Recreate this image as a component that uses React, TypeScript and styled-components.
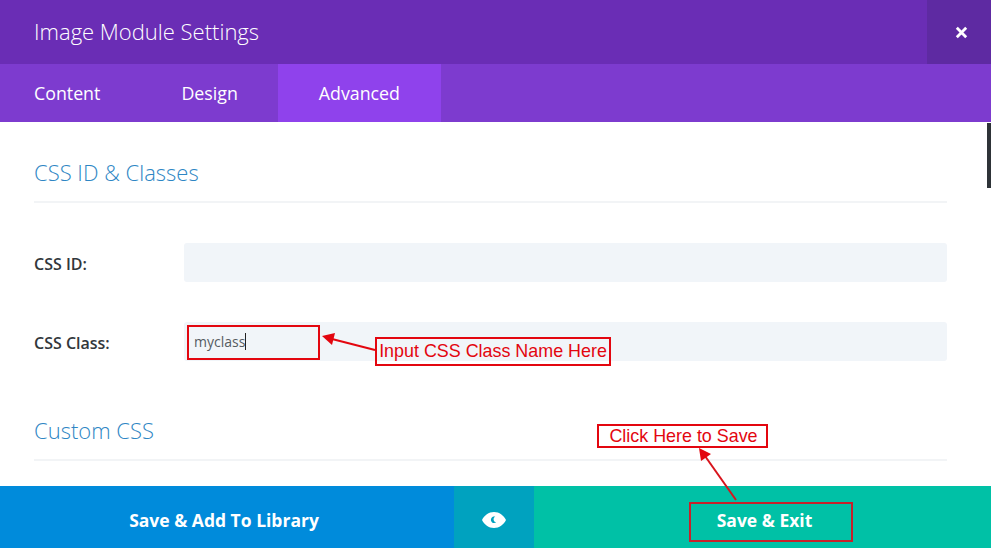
import React from "react";
import styled, { createGlobalStyle } from "styled-components";

const Global = createGlobalStyle`
  html, body { margin: 0; padding: 0; background: #fff; }
  * { box-sizing: border-box; }
`;

const Modal = styled.div`
  position: relative;
  width: 991px;
  height: 548px;
  overflow: hidden;
  display: flex;
  flex-direction: column;
  font-family: "Open Sans", sans-serif;
  background: #fff;
`;

const Header = styled.header`
  height: 64px;
  flex: none;
  display: flex;
  align-items: center;
  justify-content: space-between;
  background: #6a2db5;
`;

const Title = styled.h1`
  margin: 0 0 2px 34px;
  font-size: 22px;
  line-height: 62px;
  font-weight: 300;
  color: #fff;
`;

const CloseButton = styled.div`
  width: 64px;
  height: 64px;
  padding-left: 4px;
  display: flex;
  align-items: center;
  justify-content: center;
  background: #5e2aa2;
`;

const Tabs = styled.nav`
  height: 58px;
  flex: none;
  display: flex;
  background: #7d3bcf;
`;

const Tab = styled.div<{ $active?: boolean; $first?: boolean }>`
  display: flex;
  align-items: center;
  height: 58px;
  padding: 0 ${(p) => (p.$first || p.$active ? "41px" : "40px")} 1px ${(p) => (p.$first ? "34px" : p.$active ? "41px" : "40px")};
  font-size: 17.8px;
  font-weight: 400;
  color: #fff;
  background: ${(p) => (p.$active ? "#8f42ec" : "transparent")};
`;

const Body = styled.main`
  flex: 1;
  min-height: 0;
  padding: 0 44px 0 34px;
  position: relative;
`;

const Section = styled.section`
  padding-top: 32px;
`;

const SectionTitle = styled.h2`
  margin: 0;
  height: 49px;
  font-size: 22px;
  line-height: 36px;
  font-weight: 300;
  color: #2e86c4;
  border-bottom: 2px solid #f2f4f6;
`;

const Rows = styled.div`
  display: flex;
  flex-direction: column;
  gap: 40px;
  padding-top: 40px;
  padding-bottom: 19px;
`;

const Row = styled.div`
  display: flex;
  align-items: center;
`;

const Label = styled.label`
  width: 150px;
  padding-top: 3px;
  font-size: 16px;
  font-weight: 600;
  color: #32373c;
`;

const Field = styled.div`
  flex: 1;
  height: 39px;
  padding: 0 10px;
  display: flex;
  align-items: center;
  border-radius: 3px;
  background: #f1f5f9;
  font-size: 14px;
  color: #555b61;
`;

const Caret = styled.span`
  display: inline-block;
  width: 1px;
  height: 17px;
  background: #222;
`;

const Scrollbar = styled.div`
  position: absolute;
  right: 0;
  top: 1px;
  width: 4px;
  height: 65px;
  background: #2e3338;
`;

const Footer = styled.footer`
  height: 62px;
  flex: none;
  display: flex;
`;

const FooterButton = styled.div<{ $bg: string; $width: number; $left?: number; $right?: number }>`
  width: ${(p) => p.$width}px;
  display: flex;
  align-items: center;
  justify-content: center;
  padding: 6px ${(p) => p.$right ?? 0}px 0 ${(p) => p.$left ?? 0}px;
  background: ${(p) => p.$bg};
  font-size: 17.5px;
  font-weight: 700;
  color: #fff;
`;

const Overlay = styled.svg`
  position: absolute;
  left: 0;
  top: 0;
  pointer-events: none;
`;

const Note = styled.div<{ $x: number; $y: number; $w: number; $h: number; $dark?: boolean; $pad?: number }>`
  position: absolute;
  left: ${(p) => p.$x}px;
  top: ${(p) => p.$y}px;
  width: ${(p) => p.$w}px;
  height: ${(p) => p.$h}px;
  padding-left: ${(p) => p.$pad ?? 0}px;
  border: 2px solid ${(p) => (p.$dark ? "#c8202a" : "#e3060f")};
  display: flex;
  align-items: center;
  justify-content: center;
  font-family: "Liberation Sans", Arial, sans-serif;
  font-size: 17.9px;
  color: #e3060f;
  white-space: nowrap;
`;

const Eye = () => (
  <svg width="24" height="16" viewBox="0 0 24 16">
    <path
      fillRule="evenodd"
      fill="#fff"
      d="M12 0C6.6 0 2.4 3.4 0 8c2.400 4.600 6.600 8 12 8s9.600-3.400 12-8C21.600 3.400 17.400 0 12 0zM13.300 4.600c-1.500.8-2.100 2.500-1.500 4 .4 1 1.300 1.600 2.400 1.700-1.200 1-2.900 1-4.100.1-1.400-1.200-1.600-3.200-.5-4.600.8-1 2.100-1.500 3.700-1.200z"
    />
  </svg>
);

const Close = () => (
  <svg width="13" height="13" viewBox="0 0 13 13">
    <path d="M1.800 1.800l9.400 9.400M11.200 1.800l-9.400 9.400" stroke="#fff" strokeWidth="2.800" fill="none" />
  </svg>
);

export default function App() {
  return (
    <Modal>
      <Global />
      <Header>
        <Title>Image Module Settings</Title>
        <CloseButton>
          <Close />
        </CloseButton>
      </Header>
      <Tabs>
        <Tab $first>Content</Tab>
        <Tab>Design</Tab>
        <Tab $active>Advanced</Tab>
      </Tabs>
      <Body>
        <Scrollbar />
        <Section>
          <SectionTitle>CSS ID &amp; Classes</SectionTitle>
          <Rows>
            <Row>
              <Label>CSS ID:</Label>
              <Field />
            </Row>
            <Row>
              <Label>CSS Class:</Label>
              <Field>
                myclass
                <Caret />
              </Field>
            </Row>
          </Rows>
        </Section>
        <Section>
          <SectionTitle>Custom CSS</SectionTitle>
        </Section>
      </Body>
      <Footer>
        <FooterButton $bg="#008bdb" $width={454} $right={6}>
          Save &amp; Add To Library
        </FooterButton>
        <FooterButton $bg="#00a2bf" $width={80}>
          <Eye />
        </FooterButton>
        <FooterButton $bg="#00c1a6" $width={457} $left={4}>
          Save &amp; Exit
        </FooterButton>
      </Footer>

      <Note $x={187} $y={325} $w={133} $h={35} />
      <Note $x={375} $y={337} $w={236} $h={29}>
        Input CSS Class Name Here
      </Note>
      <Note $x={597} $y={424} $w={171} $h={24} $pad={2}>
        Click Here to Save
      </Note>
      <Note $x={689} $y={502} $w={164} $h={40} $dark />
      <Overlay width="991" height="548" viewBox="0 0 991 548">
        <line x1="375" y1="350" x2="332" y2="339" stroke="#e3060f" strokeWidth="2" />
        <polygon points="322,336 335,333 332,345" fill="#e3060f" />
        <line x1="736" y1="500" x2="705" y2="456" stroke="#d8141c" strokeWidth="2" />
        <polygon points="699,448 711,454 701,461" fill="#e3060f" />
      </Overlay>
    </Modal>
  );
}
